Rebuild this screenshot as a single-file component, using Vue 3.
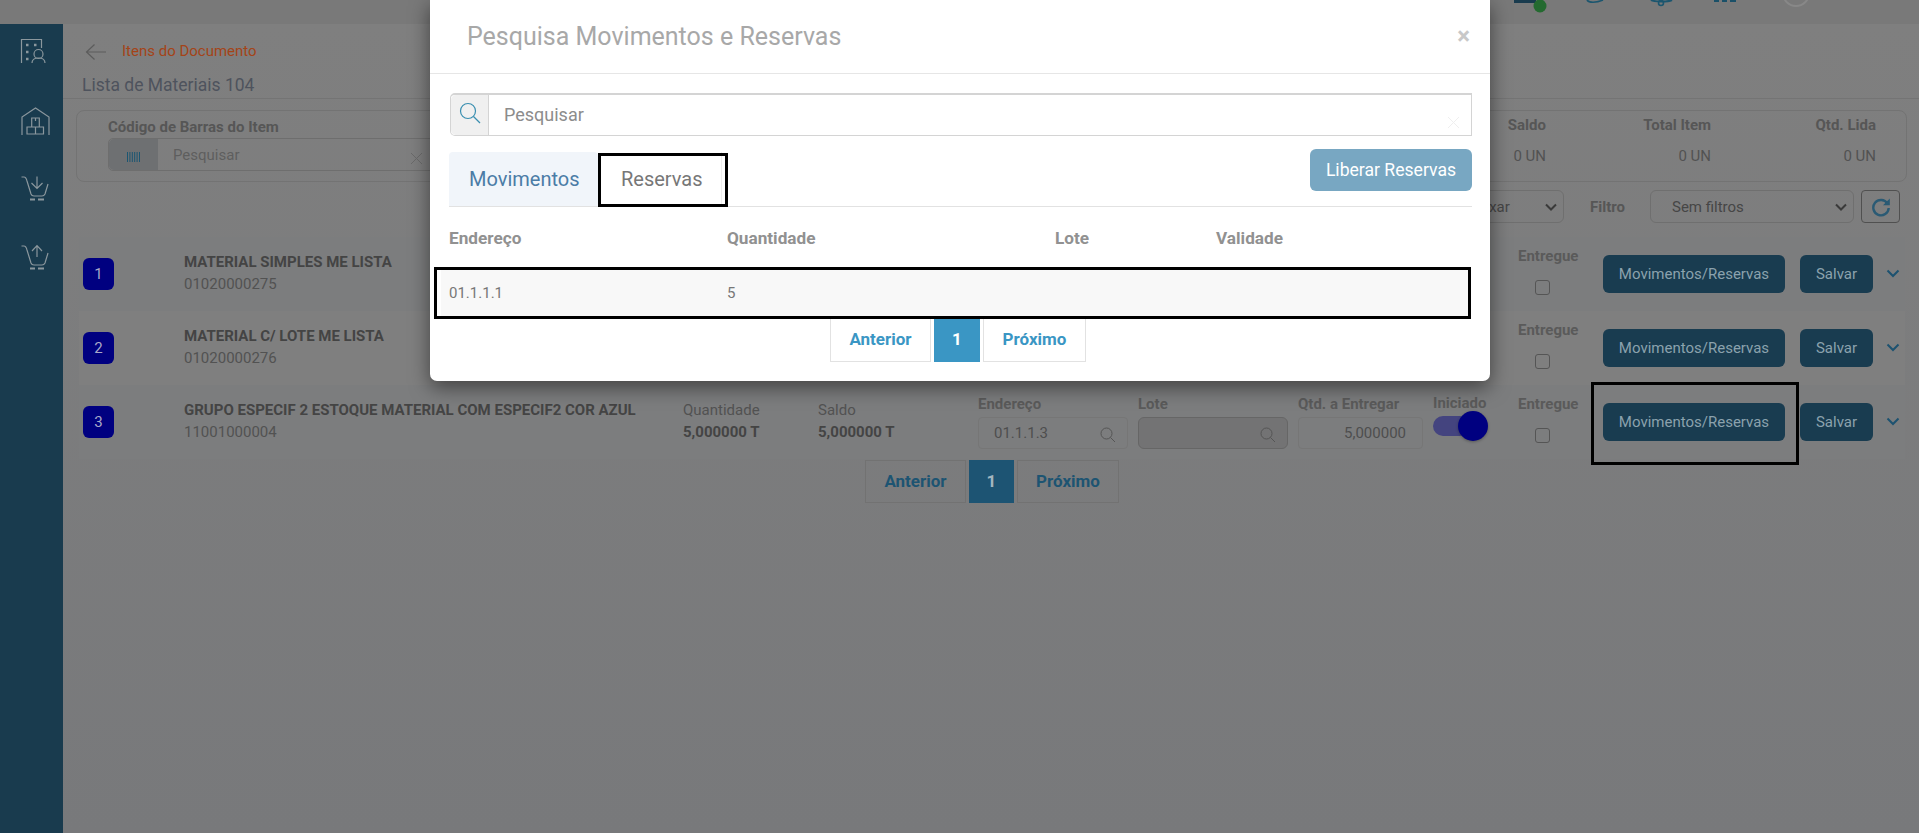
<script setup>
const rows = [
  { n: 1, covered: true, name: 'MATERIAL SIMPLES ME LISTA', code: '01020000275', qty: '5,000000 UN', saldo: '5,000000 UN', end: '01.1.1.1', give: '5,000000' },
  { n: 2, covered: true, name: 'MATERIAL C/ LOTE ME LISTA', code: '01020000276', qty: '5,000000 UN', saldo: '5,000000 UN', end: '01.1.1.2', give: '5,000000' },
  { n: 3, covered: false, name: 'GRUPO ESPECIF 2 ESTOQUE MATERIAL COM ESPECIF2 COR AZUL', code: '11001000004', qty: '5,000000 T', saldo: '5,000000 T', end: '01.1.1.3', give: '5,000000' }
]
const totals = [
  { label: 'Saldo', value: '0 UN' },
  { label: 'Total Item', value: '0 UN' },
  { label: 'Qtd. Lida', value: '0 UN' }
]
</script>

<template>
  <div class="page">
    <header class="topbar">
      <svg class="top-icons" width="429" height="24" viewBox="0 0 429 24">
        <rect x="24" y="0" width="22" height="3" fill="#193b4e" />
        <circle cx="50" cy="6" r="6.5" fill="#246a30" />
        <path d="M97 0c2 3 9 3 16 0" fill="none" stroke="#1b566f" stroke-width="1.6" />
        <path d="M161 0c3 2 17 2 21 0" fill="none" stroke="#1b566f" stroke-width="2" />
        <circle cx="171" cy="3" r="2.5" fill="none" stroke="#1b566f" stroke-width="1.6" />
        <rect x="224" y="0" width="5" height="2" fill="#1a5068" />
        <rect x="232" y="0" width="5" height="2" fill="#1a5068" />
        <rect x="240" y="0" width="6" height="2" fill="#1a5068" />
        <circle cx="306" cy="-7" r="13" fill="none" stroke="#888" stroke-width="2" />
      </svg>
    </header>
    <div class="shell">
      <nav class="sidebar">
        <svg class="nav-icon" viewBox="0 0 30 30">
          <path d="M1.500 26V2.500H21.500V11" />
          <path d="M6 8h2.500M14 8h2.500M6 15h2.500M6 22h2.500" stroke-width="2.500" />
          <circle cx="18.500" cy="17" r="4.500" />
          <path d="M12 26c0-3.500 3-5 6.500-5s6.500 1.500 6.500 5" />
        </svg>
        <svg class="nav-icon" viewBox="0 0 30 30">
          <path d="M2 29V11L15.500 2 29 11V29" />
          <path d="M11.700 21V12h7.600v9M7 28v-7h16.500v7ZM15.500 21v7M15.500 12v3" />
        </svg>
        <svg class="nav-icon" viewBox="0 0 30 30">
          <path d="M1.500 2H4c2 0 2.500 2 3 4l4 13c.5 1.500 1.500 2 3 2h8c1.500 0 2.500-1 3-2l3-10" />
          <path d="M10 24.500h5M18 24.500h6" stroke-width="2" />
          <path d="M17 1.600V13M11.500 8 17 13.500 22.500 8" />
        </svg>
        <svg class="nav-icon" viewBox="0 0 30 30">
          <path d="M1.500 2H4c2 0 2.500 2 3 4l4 13c.5 1.500 1.500 2 3 2h8c1.500 0 2.500-1 3-2l3-10" />
          <path d="M10 24.500h5M18 24.500h6" stroke-width="2" />
          <path d="M17 13V1.600M12 7l5-5.400L22 7" />
        </svg>
      </nav>
      <main class="main">
        <section class="page-head">
          <div class="crumb">
            <svg class="back" width="22" height="18" viewBox="0 0 22 18">
              <path d="M21 9H1.500M9.500 1.500 1.500 9l8 7.500" />
            </svg>
            <span>Itens do Documento</span>
          </div>
          <h1>Lista de Materiais 104</h1>
        </section>

        <section class="card">
          <div class="barcode">
            <label>Código de Barras do Item</label>
            <div class="barcode-input">
              <span class="barcode-addon">
                <svg width="13" height="10" viewBox="0 0 13 10">
                  <path d="M.5 0v10M2.900 0v10M5.300 0v10M7.700 0v10M10.100 0v10M12.500 0v10" stroke="#1b5672" stroke-width="1" />
                </svg>
              </span>
              <span class="barcode-text">Pesquisar</span>
              <svg class="barcode-clear" width="13" height="13" viewBox="0 0 13 13">
                <path d="M1 1l11 11M12 1 1 12" stroke="#6a6a6a" stroke-width="1" />
              </svg>
            </div>
          </div>
          <div class="totals">
            <div v-for="t in totals" :key="t.label" class="total">
              <strong>{{ t.label }}</strong>
              <span>{{ t.value }}</span>
            </div>
          </div>
        </section>

        <section class="filters">
          <div class="select select-status">
            <span>Baixar</span>
            <svg width="12" height="8" viewBox="0 0 12 8"><path d="M1 1.500 6 6.500l5-5" /></svg>
          </div>
          <strong class="filter-label">Filtro</strong>
          <div class="select select-filter">
            <span>Sem filtros</span>
            <svg width="12" height="8" viewBox="0 0 12 8"><path d="M1 1.500 6 6.500l5-5" /></svg>
          </div>
          <button class="refresh">
            <svg width="20" height="20" viewBox="0 0 20 20">
              <path d="M16.500 6.500A7.700 7.700 0 1 0 17.700 11" fill="none" stroke="#2a5a74" stroke-width="2.400" />
              <path d="M18.800 1.500v6.800H12Z" fill="#2a5a74" />
            </svg>
          </button>
        </section>

        <section class="list">
          <article v-for="r in rows" :key="r.n" class="row">
            <div class="badge">{{ r.n }}</div>
            <div class="info">
              <strong>{{ r.name }}</strong>
              <span>{{ r.code }}</span>
            </div>
            <div class="info" :class="{ covered: r.covered }">
              <span>Quantidade</span>
              <strong>{{ r.qty }}</strong>
            </div>
            <div class="info" :class="{ covered: r.covered }">
              <span>Saldo</span>
              <strong>{{ r.saldo }}</strong>
            </div>
            <div class="field" :class="{ covered: r.covered }">
              <label>Endereço</label>
              <div class="input input-end">
                <span>{{ r.end }}</span>
                <svg width="16" height="16" viewBox="0 0 16 16"><circle cx="6.500" cy="6.500" r="5.500" /><path d="M10.500 10.500 15 15" /></svg>
              </div>
            </div>
            <div class="field" :class="{ covered: r.covered }">
              <label>Lote</label>
              <div class="input input-lote">
                <span></span>
                <svg width="16" height="16" viewBox="0 0 16 16"><circle cx="6.500" cy="6.500" r="5.500" /><path d="M10.500 10.500 15 15" /></svg>
              </div>
            </div>
            <div class="field field-qty" :class="{ covered: r.covered }">
              <label>Qtd. a Entregar</label>
              <div class="input input-qty">{{ r.give }}</div>
            </div>
            <div class="field field-toggle" :class="{ covered: r.covered }">
              <label>Iniciado</label>
              <div class="toggle"><i></i></div>
            </div>
            <div class="field field-check">
              <label>Entregue</label>
              <div class="check"></div>
            </div>
            <button class="btn btn-mov">Movimentos/Reservas</button>
            <button class="btn btn-save">Salvar</button>
            <svg class="chevron" width="14" height="9" viewBox="0 0 14 9"><path d="M1.500 1.500 7 7l5.500-5.500" /></svg>
          </article>
        </section>

        <nav class="pager pager-page">
          <a>Anterior</a>
          <a class="current">1</a>
          <a>Próximo</a>
        </nav>
      </main>
    </div>

    <div class="modal">
      <div class="modal-head">
        <h2>Pesquisa Movimentos e Reservas</h2>
        <span class="close">×</span>
      </div>
      <div class="modal-body">
        <div class="search">
          <span class="search-addon">
            <svg width="22" height="22" viewBox="0 0 22 22">
              <circle cx="9" cy="9" r="7.500" fill="none" stroke="#3a8fb0" stroke-width="1.200" />
              <path d="M14.500 14.500 21 21" stroke="#3a8fb0" stroke-width="1.200" />
            </svg>
          </span>
          <span class="search-text">Pesquisar</span>
          <svg class="search-clear" width="13" height="13" viewBox="0 0 13 13">
            <path d="M1 1l11 11M12 1 1 12" stroke="#efefef" stroke-width="1" />
          </svg>
        </div>
        <div class="tabs">
          <div class="tab tab-active">Movimentos</div>
          <div class="tab tab-plain">Reservas</div>
          <button class="release">Liberar Reservas</button>
        </div>
        <div class="table-head">
          <strong>Endereço</strong>
          <strong>Quantidade</strong>
          <strong>Lote</strong>
          <strong>Validade</strong>
        </div>
        <div class="table-row">
          <span>01.1.1.1</span>
          <span>5</span>
          <span></span>
          <span></span>
        </div>
        <nav class="pager pager-modal">
          <a>Anterior</a>
          <a class="current">1</a>
          <a>Próximo</a>
        </nav>
      </div>
    </div>

    <div class="mark mark-tab"></div>
    <div class="mark mark-row"></div>
    <div class="mark mark-btn"></div>
  </div>
</template>

<style>
html, body { margin: 0; overflow: hidden; }
</style>

<style scoped>
* { box-sizing: border-box; }
.page {
  position: relative;
  width: 1919px;
  height: 833px;
  overflow: hidden;
  background: #7b7c7e;
  font-family: Roboto, "Liberation Sans", sans-serif;
  font-size: 15px;
  color: #505050;
}
.topbar { height: 24px; background: #797979; display: flex; justify-content: flex-end; }
.top-icons { display: block; }
.shell { display: flex; height: 809px; }
.sidebar {
  width: 63px;
  flex: none;
  background: #193b4e;
  padding: 13px 0 0 20px;
  display: flex;
  flex-direction: column;
  gap: 39px;
}
.nav-icon { width: 30px; height: 30px; fill: none; stroke: #8b979d; stroke-width: 1.200; }
.main {
  flex: 1;
  min-width: 0;
  background: linear-gradient(#7f7f7f, #78797b);
  padding-top: 16px;
}
.covered { visibility: hidden; }
.page-head { height: 59px; border-bottom: 1px solid #747474; padding-left: 19px; }
.crumb { display: flex; align-items: center; height: 21px; color: #a44418; font-size: 15px; }
.back { margin: 3px 15px 0 3px; fill: none; stroke: #5c5c5c; stroke-width: 1.200; }
h1 { margin: 12px 0 0; font-size: 17.500px; font-weight: 400; line-height: 24px; color: #4e535d; }

.card {
  margin: 11px 12px 0 13px;
  height: 72px;
  border: 1px solid #737373;
  border-radius: 8px;
  display: flex;
  justify-content: space-between;
  padding: 6px 30px 0 31px;
}
.barcode label { display: block; line-height: 20px; font-weight: 700; font-size: 15px; color: #565656; }
.barcode-input {
  position: relative;
  width: 400px;
  height: 33px;
  margin-top: 1px;
  display: flex;
  align-items: center;
  border: 1px solid #6e6e6e;
  border-radius: 5px;
}
.barcode-addon {
  width: 49px;
  height: 31px;
  flex: none;
  background: #6e7072;
  border-radius: 5px 0 0 5px;
  display: flex;
  align-items: center;
  justify-content: center;
  padding-top: 5px;
}
.barcode-text { margin-left: 15px; font-size: 15px; color: #5e5e5e; margin-top: 0; }
.barcode-clear { position: absolute; left: 301px; top: 13px; }
.totals { display: flex; padding-top: 0; }
.total { width: 165px; display: flex; flex-direction: column; align-items: flex-end; }
.total strong { line-height: 20px; margin-top: -2px; font-size: 15px; color: #565656; font-weight: 700; }
.total span { line-height: 20px; margin-top: 11px; font-size: 15px; color: #525252; }

.filters {
  margin-top: 8px;
  height: 33px;
  display: flex;
  justify-content: flex-end;
  align-items: center;
  padding-right: 19px;
}
.select {
  height: 33px;
  border: 1px solid #6f6f6f;
  border-radius: 6px;
  display: flex;
  align-items: center;
  justify-content: space-between;
  font-size: 15px;
  color: #464646;
  padding-right: 6px;
}
.select svg { fill: none; stroke: #3a3a3a; stroke-width: 2; }
.select-status { width: 184px; padding-left: 87px; }
.select-filter { width: 204px; padding-left: 21px; }
.filter-label { margin-left: 26px; width: 60px; font-size: 15px; color: #565656; }
.refresh {
  width: 39px;
  height: 33px;
  margin-left: 7px;
  background: transparent;
  border: 1px solid #505050;
  border-radius: 4px;
  padding: 0;
  display: flex;
  align-items: center;
  justify-content: center;
}

.list { margin: 14px 14px 0 16px; }
.row {
  height: 74px;
  padding-left: 4px;
  display: grid;
  grid-template-columns: 101px 499px 135px 160px 160px 160px 135px 85px 85px 197px 86px 15px;
  align-items: start;
  background: #7c7d7e;
}
.row:nth-child(2) { background: #7f7f7f; }
.badge {
  margin-top: 21px;
  width: 31px;
  height: 32px;
  border-radius: 6px;
  background: #000080;
  color: #a9a9c8;
  font-size: 15px;
  display: flex;
  align-items: center;
  justify-content: center;
}
.info { margin-top: 14px; display: flex; flex-direction: column; line-height: 22px; white-space: nowrap; }
.info strong { font-weight: 700; color: #444; font-size: 15px; }
.info span { color: #525252; }
.field { margin-top: 10px; }
.field label { display: block; line-height: 18px; font-weight: 700; font-size: 15px; color: #5a5a5a; white-space: nowrap; }
.input {
  margin-top: 4px;
  width: 150px;
  height: 32px;
  border: 1px solid #767676;
  border-radius: 4px;
  display: flex;
  align-items: center;
  justify-content: space-between;
  padding: 0 11px 0 15px;
  color: #4e4e4e;
}
.input svg { fill: none; stroke: #555; stroke-width: 1; margin-top: 3px; }
.input-lote { background: #737374; border-color: #666; border-radius: 6px; }
.input-qty { width: 125px; justify-content: flex-end; padding-right: 16px; }
.field-toggle label { margin-top: -1px; }
.toggle {
  position: relative;
  width: 37px;
  height: 20px;
  margin-top: 4px;
  border-radius: 10px;
  background: #44447f;
}
.toggle i {
  position: absolute;
  left: 25px;
  top: -5px;
  width: 30px;
  height: 30px;
  border-radius: 50%;
  background: #000080;
  box-shadow: 0 1px 3px rgba(0, 0, 0, .3);
}
.check {
  margin: 15px 0 0 17px;
  width: 15px;
  height: 15px;
  border: 1.500px solid #555;
  border-radius: 3px;
}
.btn {
  margin-top: 18px;
  height: 38px;
  border: 0;
  border-radius: 6px;
  background: #193c50;
  color: #8ba2ad;
  font-family: inherit;
  font-size: 15px;
  padding: 0 0 1px;
}
.btn-mov { width: 182px; }
.btn-save { width: 73px; }
.chevron { margin-top: 32px; fill: none; stroke: #1d5270; stroke-width: 2; }

.pager { display: flex; }
.pager a {
  display: flex;
  align-items: center;
  justify-content: center;
  font-weight: 700;
  font-size: 17px;
  padding-bottom: 2px;
}
.pager-page { margin: 1px 0 0 802px; height: 43px; gap: 3px; }
.pager-page a { border: 1px solid #727272; color: #1d5472; }
.pager-page a:nth-child(1) { width: 101px; }
.pager-page a:nth-child(3) { width: 102px; }
.pager-page a.current { width: 45px; background: #1d5473; border-color: #1d5473; color: #a3b6c0; }

.modal {
  position: absolute;
  left: 430px;
  top: 0;
  width: 1060px;
  height: 381px;
  background: #fff;
  border-radius: 0 0 7px 7px;
  box-shadow: 0 6px 20px rgba(0, 0, 0, .5);
}
.modal-head {
  height: 74px;
  border-bottom: 1px solid #e6e6e6;
  display: flex;
  align-items: center;
  justify-content: space-between;
  padding: 0 20px 1px 37px;
}
h2 { margin: 0; font-size: 25px; font-weight: 400; color: #a8a8a8; }
.close { font-size: 24px; font-weight: 700; color: #c8c8c8; line-height: 1; }
.modal-body { padding: 19px 18px 0 19px; }
.search {
  position: relative;
  height: 43px;
  margin-left: 1px;
  border: 1px solid #d4d4d4;
  border-top-width: 2px;
  border-radius: 5px 0 0 5px;
  display: flex;
  align-items: center;
}
.search-addon {
  width: 38px;
  height: 100%;
  flex: none;
  background: #f0f0f0;
  border-right: 1px solid #d4d4d4;
  border-radius: 5px 0 0 5px;
  display: flex;
  align-items: center;
  padding: 0 0 5px 8px;
}
.search-text { margin-left: 15px; margin-top: -2px; font-size: 18px; color: #8c8c8c; }
.search-clear { position: absolute; right: 11px; top: 21px; }
.tabs {
  margin-top: 13px;
  height: 58px;
  display: flex;
  align-items: flex-end;
  border-bottom: 1px solid #e2e2e2;
  font-size: 20px;
}
.tab { height: 54px; display: flex; align-items: center; }
.tab-active { width: 149px; padding-left: 20px; background: #f1f5fa; color: #4b7ca6; border-radius: 4px 4px 0 0; }
.tab-plain { width: 124px; padding-left: 23px; color: #777; border-right: 1px solid #eee; }
.release {
  align-self: flex-start;
  margin-left: auto;
  width: 162px;
  height: 42px;
  border: 0;
  border-radius: 6px;
  background: #78a7c2;
  color: #fff;
  font-family: inherit;
  font-size: 17.600px;
  padding: 0;
}
.table-head, .table-row { display: grid; grid-template-columns: 278px 328px 161px 1fr; align-items: center; }
.table-head { height: 60px; padding-top: 2px; font-size: 17.200px; color: #919191; }
.table-row {
  height: 52px;
  margin: 0 3px 0 -8px;
  padding-left: 8px;
  background: #f8f8f8;
  color: #777;
  font-size: 15px;
}
.pager-modal { height: 43px; justify-content: flex-start; margin-left: 381px; gap: 3px; }
.pager-modal a { border: 1px solid #e2e2e2; border-top: 0; color: #3a96c4; }
.pager-modal a:nth-child(1) { width: 101px; }
.pager-modal a:nth-child(3) { width: 103px; }
.pager-modal a.current { width: 46px; background: #3a96c4; border-color: #3a96c4; color: #fff; }

.mark { position: absolute; border: 3px solid #000; }
.mark-tab { left: 598px; top: 153px; width: 130px; height: 54px; }
.mark-row { left: 434px; top: 267px; width: 1037px; height: 52px; }
.mark-btn { left: 1591px; top: 382px; width: 208px; height: 83px; }
</style>
